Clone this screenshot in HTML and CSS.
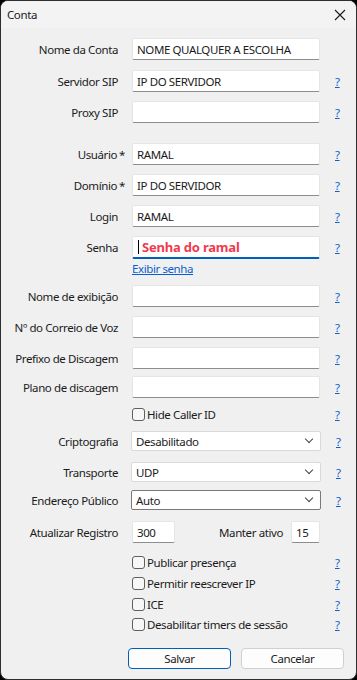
FILE: index.html
```html
<!DOCTYPE html>
<html lang="pt">
<head>
  <meta charset="UTF-8" />
  <title>Conta</title>
  <link rel="stylesheet" href="styles.css">
</head>
<body>
  <div class="window">
    <!-- Title bar -->
    <div class="title-bar">
      <span class="title">Conta</span>
      <svg class="close" width="12" height="12" viewBox="0 0 12 12">
        <path d="M1 1 L11 11 M11 1 L1 11" stroke="#1a1a1a" stroke-width="1.1" fill="none"/>
      </svg>
    </div>

    <div class="form">
      <div class="row first">
        <label class="label">Nome da Conta</label>
        <div class="field"><input class="input" value="NOME QUALQUER A ESCOLHA"></div>
        <span></span>
      </div>
      <div class="row">
        <label class="label">Servidor SIP</label>
        <div class="field"><input class="input" value="IP DO SERVIDOR"></div>
        <a class="help">?</a>
      </div>
      <div class="row tight">
        <label class="label">Proxy SIP</label>
        <div class="field"><input class="input" value=""></div>
        <a class="help">?</a>
      </div>

      <div class="row group">
        <label class="label req">Usuário</label>
        <div class="field"><input class="input" value="RAMAL"></div>
        <a class="help">?</a>
      </div>
      <div class="row tight">
        <label class="label req">Domínio</label>
        <div class="field"><input class="input" value="IP DO SERVIDOR"></div>
        <a class="help">?</a>
      </div>
      <div class="row tight">
        <label class="label">Login</label>
        <div class="field"><input class="input" value="RAMAL"></div>
        <a class="help">?</a>
      </div>
      <div class="row tight">
        <label class="label">Senha</label>
        <div class="field">
          <div class="input focused"><span class="caret"></span><span class="note">Senha do ramal</span></div>
        </div>
        <a class="help">?</a>
      </div>
      <div class="link-row">
        <a class="show-pass">Exibir senha</a>
      </div>

      <div class="row after-link">
        <label class="label">Nome de exibição</label>
        <div class="field"><input class="input" value=""></div>
        <a class="help">?</a>
      </div>
      <div class="row tight">
        <label class="label">Nº do Correio de Voz</label>
        <div class="field"><input class="input" value=""></div>
        <a class="help">?</a>
      </div>
      <div class="row tight">
        <label class="label">Prefixo de Discagem</label>
        <div class="field"><input class="input" value=""></div>
        <a class="help">?</a>
      </div>
      <div class="row plano">
        <label class="label">Plano de discagem</label>
        <div class="field"><input class="input" value=""></div>
        <a class="help">?</a>
      </div>

      <div class="row check-row hide-id">
        <span></span>
        <div class="check"><span class="box"></span>Hide Caller ID</div>
        <a class="help">?</a>
      </div>

      <div class="row select-row crypt">
        <label class="label">Criptografia</label>
        <div class="field"><div class="select">Desabilitado<span class="chev"></span></div></div>
        <a class="help">?</a>
      </div>
      <div class="row select-row transport">
        <label class="label">Transporte</label>
        <div class="field"><div class="select">UDP<span class="chev"></span></div></div>
        <a class="help">?</a>
      </div>
      <div class="row select-row public">
        <label class="label">Endereço Público</label>
        <div class="field"><div class="select active">Auto<span class="chev"></span></div></div>
        <a class="help">?</a>
      </div>

      <div class="row timers">
        <label class="label">Atualizar Registro</label>
        <div class="field split">
          <input class="input short" value="300">
          <span class="keep-label">Manter ativo</span>
          <input class="input tiny" value="15">
        </div>
        <span></span>
      </div>

      <div class="row check-row first-check">
        <span></span>
        <div class="check"><span class="box"></span>Publicar presença</div>
        <a class="help">?</a>
      </div>
      <div class="row check-row next-check">
        <span></span>
        <div class="check"><span class="box"></span>Permitir reescrever IP</div>
        <a class="help">?</a>
      </div>
      <div class="row check-row next-check">
        <span></span>
        <div class="check"><span class="box"></span>ICE</div>
        <a class="help">?</a>
      </div>
      <div class="row check-row last-check">
        <span></span>
        <div class="check"><span class="box"></span>Desabilitar timers de sessão</div>
        <a class="help">?</a>
      </div>

      <div class="buttons">
        <button class="btn primary">Salvar</button>
        <button class="btn">Cancelar</button>
      </div>
    </div>
  </div>
</body>
</html>
```

FILE: styles.css
```css
/*
  BASIC RESETS
*/
* {
  margin: 0;
  padding: 0;
  box-sizing: border-box;
}

body {
  background-color: #000;
  font-family: "Noto Sans", "Open Sans", sans-serif;
  font-size: 11.5px;
  letter-spacing: -0.4px;
  color: #1b1b1b;
  width: 357px;
  height: 680px;
  overflow: hidden;
}

/*
  WINDOW FRAME
*/
.window {
  width: 357px;
  height: 680px;
  background-color: #f0f0f0;
  border: 1px solid #2e2e2e;
  border-radius: 8px;
  overflow: hidden;
}

.title-bar {
  height: 27px;
  background-color: #f3f3f3;
  display: flex;
  align-items: center;
  justify-content: space-between;
  padding: 0 10px 0 6px;
}

.title {
  color: #1a1a1a;
}

.close {
  display: block;
}

/*
  FORM ROWS
*/
.form {
  display: flex;
  flex-direction: column;
}

.row {
  display: grid;
  grid-template-columns: 117px 188px 1fr;
  column-gap: 14px;
  align-items: center;
  height: 22px;
  margin-top: 10px;
}

.row.tight { margin-top: 9px; }
.row.group { margin-top: 20px; }
.row.after-link { margin-top: 10px; }
.row.plano { margin-top: 7px; }

.label {
  text-align: right;
  white-space: nowrap;
  color: #1b1b1b;
}

.label.req::after {
  content: "*";
  margin-left: 2px;
  margin-right: -7px;
}

.input {
  display: block;
  width: 100%;
  height: 22px;
  border: 1px solid #e5e5e5;
  border-bottom: 1px solid #8d8d8d;
  border-radius: 2px;
  background-color: #fff;
  font-family: inherit;
  font-size: 11.5px;
  letter-spacing: -0.4px;
  color: #1b1b1b;
  padding: 0 4px;
  outline: none;
}

.input.focused {
  display: flex;
  align-items: center;
  height: 23px;
  border-bottom: 2px solid #005fb8;
  padding-left: 5px;
}

.caret {
  width: 1px;
  height: 14px;
  background-color: #000;
  margin-right: 3px;
}

.note {
  color: #f03a4f;
  font-weight: bold;
  font-size: 13px;
  letter-spacing: -0.2px;
}

.help {
  color: #0a5fd0;
  text-decoration: underline;
  padding-left: 1px;
}

.link-row {
  height: 14px;
  margin-top: 3px;
  padding-left: 131px;
  display: flex;
  align-items: center;
}

.show-pass {
  color: #0a5fd0;
  text-decoration: underline;
}

/*
  CHECKBOXES
*/
.check-row { height: 16px; }
.check-row.hide-id { margin-top: 8px; }
.check-row.first-check { margin-top: 11px; }
.check-row.next-check { margin-top: 5px; }
.check-row.last-check { margin-top: 4px; }

.check {
  display: flex;
  align-items: center;
  white-space: nowrap;
}

.box {
  width: 13px;
  height: 13px;
  border: 1px solid #5f5f5f;
  border-radius: 3px;
  background-color: #f7f7f7;
  margin-right: 2px;
}

/*
  SELECTS
*/
.select-row { height: 20px; }
.select-row.crypt { margin-top: 9px; }
.select-row.transport { margin-top: 11px; }
.select-row.public { margin-top: 8px; }

.row.select-row {
  grid-template-columns: 117px 189px 1fr;
  column-gap: 14px;
}

.select-row .field { margin-left: -1px; }

.select {
  display: flex;
  align-items: center;
  justify-content: space-between;
  height: 20px;
  background-color: #fff;
  border: 1px solid #d9d9d9;
  border-radius: 2px;
  padding: 0 8px 0 4px;
}

.select.active {
  border-color: #7a7a7a;
}

.chev {
  width: 6px;
  height: 6px;
  border-right: 1px solid #444;
  border-bottom: 1px solid #444;
  transform: rotate(45deg);
  margin-top: -4px;
}

/*
  TIMERS
*/
.row.timers { margin-top: 11px; }

.field.split {
  display: flex;
  align-items: center;
}

.input.short { width: 43px; }
.input.tiny { width: 29px; }

.keep-label {
  margin-left: auto;
  margin-right: 8px;
}

/*
  BUTTONS
*/
.buttons {
  display: flex;
  gap: 10px;
  padding-left: 127px;
  margin-top: 16px;
}

.btn {
  width: 103px;
  height: 21px;
  background-color: #fdfdfd;
  border: 1px solid #d0d0d0;
  border-radius: 4px;
  font-family: inherit;
  font-size: 11.5px;
  letter-spacing: -0.4px;
  color: #1b1b1b;
}

.btn.primary {
  border-color: #005fb8;
}
```
